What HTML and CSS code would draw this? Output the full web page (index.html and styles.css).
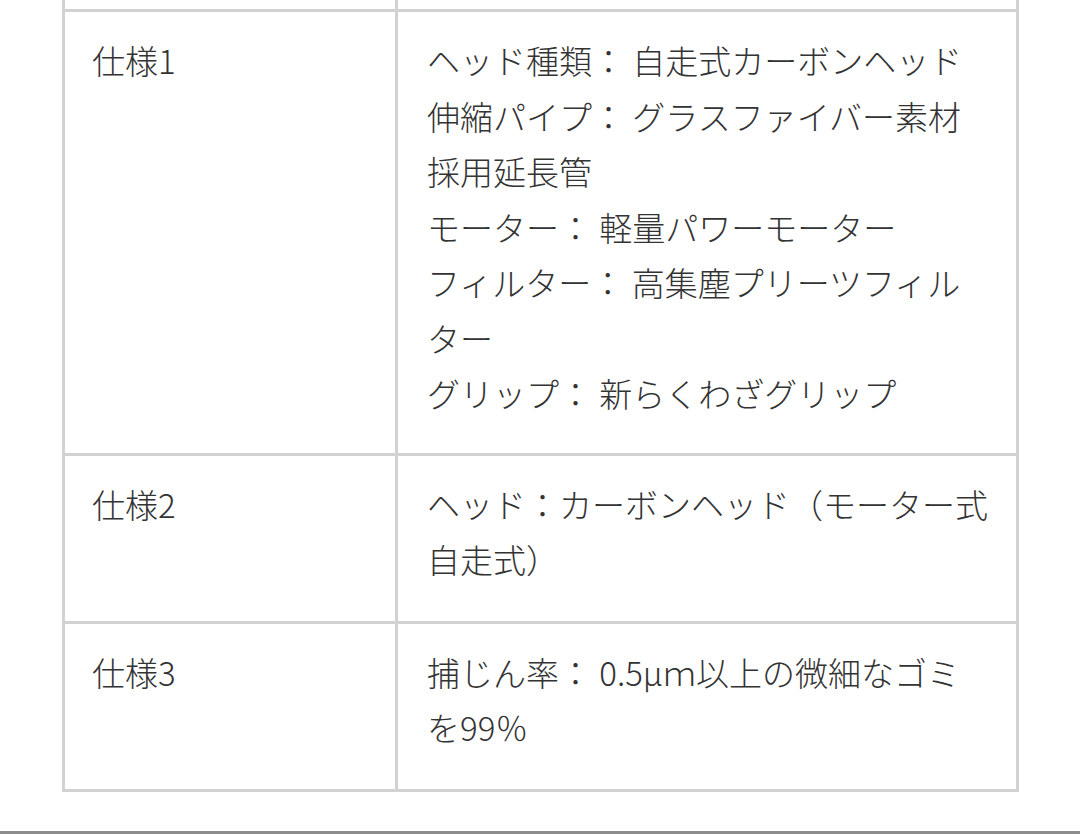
FILE: index.html
```html
<!DOCTYPE html>
<html lang="ja">
<head>
<meta charset="utf-8">
<link rel="stylesheet" href="styles.css">
</head>
<body>
<div class="page">
  <div class="spec-table">
    <div class="cell cut"></div>
    <div class="cell cut"></div>

    <div class="cell label">仕様1</div>
    <div class="cell value">
      <div>ヘッド種類： 自走式カーボンヘッド</div>
      <div>伸縮パイプ： グラスファイバー素材採用延長管</div>
      <div>モーター： 軽量パワーモーター</div>
      <div>フィルター： 高集塵プリーツフィルター</div>
      <div>グリップ： 新らくわざグリップ</div>
    </div>

    <div class="cell label">仕様2</div>
    <div class="cell value short">ヘッド：カーボンヘッド（モーター式自走式）</div>

    <div class="cell label">仕様3</div>
    <div class="cell value short">捕じん率： 0.5μｍ以上の微細なゴミを99％</div>
  </div>
  <div class="bottom-bar"></div>
</div>
</body>
</html>
```
FILE: styles.css
```css
html, body {
  margin: 0;
  padding: 0;
  background: #ffffff;
}

.page {
  height: 834px;
  overflow: hidden;
  display: flex;
  flex-direction: column;
}

.spec-table {
  margin-left: 62px;
  width: 957px;
  box-sizing: border-box;
  display: grid;
  grid-template-columns: 330px 618px;
  column-gap: 3px;
  row-gap: 3px;
  padding: 0 3px 3px 3px;
  background: #d2d2d2;
  font-family: "Noto Sans CJK JP", "Noto Sans", sans-serif;
  font-weight: 300;
  font-size: 33px;
  line-height: 55.5px;
  color: #333333;
}

.cell {
  background: #ffffff;
}

.cell.cut {
  height: 9px;
}

.label {
  padding: 21px 28px 28px 27px;
}

.value {
  padding: 21px 27px 31px 29px;
}

.value.short {
  padding-bottom: 33px;
}

.bottom-bar {
  margin-top: auto;
  height: 3px;
  background: #8c8c8c;
}
```
